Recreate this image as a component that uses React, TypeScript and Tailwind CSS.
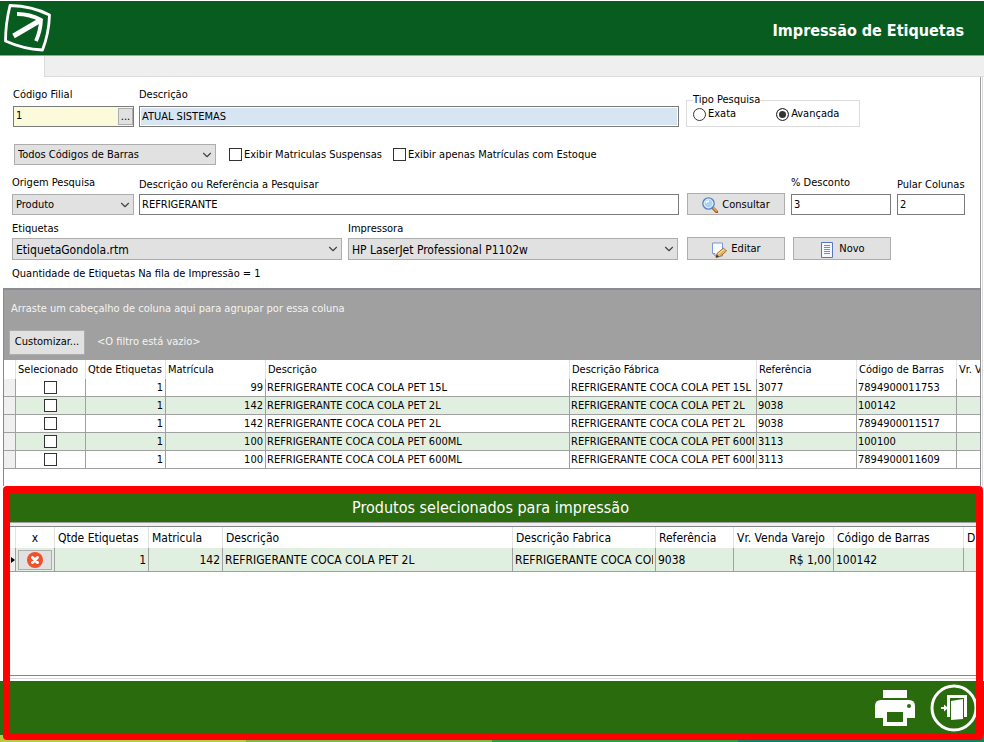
import { useId } from 'react'
import type { ReactNode } from 'react'
import { ChevronDown } from 'lucide-react'

const products = [
  { id: '99', descricao: 'REFRIGERANTE COCA COLA PET 15L', referencia: '3077', barras: '7894900011753' },
  { id: '142', descricao: 'REFRIGERANTE COCA COLA PET 2L', referencia: '9038', barras: '100142' },
  { id: '142', descricao: 'REFRIGERANTE COCA COLA PET 2L', referencia: '9038', barras: '7894900011517' },
  { id: '100', descricao: 'REFRIGERANTE COCA COLA PET 600ML', referencia: '3113', barras: '100100' },
  { id: '100', descricao: 'REFRIGERANTE COCA COLA PET 600ML', referencia: '3113', barras: '7894900011609' },
]

const inputClass = 'h-[21px] w-full min-w-0 border border-[#7a7a7a] bg-white px-[2px] outline-none'
const buttonClass = 'flex w-[98px] items-center justify-center gap-1 border border-[#adadad] bg-[#e1e1e1] pt-[2px]'
const checkClass = 'h-[13px] w-[13px] shrink-0 appearance-none border border-[#333] bg-white checked:bg-[#333]'
const radioClass =
  'h-[13px] w-[13px] shrink-0 appearance-none rounded-full border border-[#333] bg-white checked:bg-[#333] checked:shadow-[inset_0_0_0_2px_white]'

type FieldProps = {
  label: string
  className?: string
  labelClass?: string
  children: (id: string) => ReactNode
}

function Field({ label, className = '', labelClass = 'h-[17px]', children }: FieldProps) {
  const id = useId()
  return (
    <div className={`flex min-w-0 flex-col justify-end ${className}`}>
      <label htmlFor={id} className={`whitespace-nowrap leading-4 ${labelClass}`}>
        {label}
      </label>
      {children(id)}
    </div>
  )
}

function Select({ id, value, label, className = 'h-[21px]' }: { id?: string; value: string; label?: string; className?: string }) {
  return (
    <div className={`relative ${className}`}>
      <select
        id={id}
        aria-label={label}
        className="h-full w-full appearance-none border border-[#adadad] bg-[#e1e1e1] pt-[2px] pr-5 pl-[3px] outline-none"
      >
        <option>{value}</option>
      </select>
      <ChevronDown className="pointer-events-none absolute top-1/2 right-[2px] h-[14px] w-[14px] -translate-y-1/2 text-[#444]" strokeWidth={2} />
    </div>
  )
}

function LogoIcon() {
  return (
    <svg viewBox="0 0 48 50" className="h-[50px] w-12" fill="none" stroke="#fff">
      <path d="M6 2.500 Q28 3 45.500 12 Q45 30 38.500 47 Q19 46 1.500 38 Q1.500 21 6 2.500Z" strokeWidth="2.800" strokeLinejoin="round" />
      <path d="M13 11 Q26 11 37 17 Q36.500 28 32 38" strokeWidth="3.800" />
      <path d="M36 17.500 L9.500 33" strokeWidth="5" />
    </svg>
  )
}

function SearchIcon() {
  return (
    <svg viewBox="0 0 16 16" className="h-4 w-4">
      <path d="M10 10 L15 15" stroke="#9a5a2b" strokeWidth="3" strokeLinecap="round" />
      <path d="M11 10.500 L14.500 14" stroke="#f2a65c" strokeWidth="1.500" strokeLinecap="round" />
      <circle cx="6.500" cy="6.500" r="5.700" fill="#a9d2f7" stroke="#5b83c4" strokeWidth="1.300" />
      <circle cx="6.500" cy="6.500" r="4.300" fill="none" stroke="#e4f1fd" />
      <path d="M4 6 Q4.500 4 7 4" stroke="#fff" strokeWidth="1.300" fill="none" />
    </svg>
  )
}

function EditIcon() {
  return (
    <svg viewBox="0 0 16 16" className="h-4 w-4">
      <path d="M1.500 1 H11.500 V14 H4 L1.500 11.500Z" fill="#f8fbff" stroke="#7d9bd6" />
      <path d="M1.500 11.500 H4 V14" fill="#cfdcf3" stroke="#7d9bd6" />
      <path d="M5 15.500 L6 11.500 L12.500 6 L15.500 9 L9 14.500Z" fill="#f0b35a" stroke="#8a5a2a" strokeWidth="0.800" />
      <path d="M7 12 L13.500 7" stroke="#ffe2a3" />
      <path d="M5 15.500 L5.800 12.500 L8 14.700Z" fill="#333" />
    </svg>
  )
}

function NewIcon() {
  return (
    <svg viewBox="0 0 16 16" className="h-4 w-4">
      <path d="M2.500 .5 H13.500 V15.500 H2.500Z" fill="#f5f9ff" stroke="#5577c0" />
      <path d="M5 3.500 H11 M5 5.500 H11 M5 7.500 H11 M5 9.500 H11 M5 11.500 H11" stroke="#6f8fce" />
    </svg>
  )
}

function RemoveIcon() {
  return (
    <svg viewBox="0 0 16 16" className="h-4 w-4">
      <circle cx="8" cy="8" r="8" fill="#f0512d" />
      <path d="M5.500 5.500 L10.500 10.500 M10.500 5.500 L5.500 10.500" stroke="#fff" strokeWidth="3" strokeLinecap="round" />
    </svg>
  )
}

function PrinterIcon() {
  return (
    <svg viewBox="0 0 40 36" className="h-9 w-10">
      <path d="M8 0 H32 V8 H8Z" fill="#fff" />
      <path d="M6 10 H34 Q40 10 40 16 V28 H32 V36 H8 V28 H0 V16 Q0 10 6 10Z" fill="#fff" />
      <path d="M12 22 H28 V32 H12Z" fill="#2a6b0d" />
      <circle cx="34" cy="16" r="2" fill="#2a6b0d" />
    </svg>
  )
}

function ExitIcon() {
  return (
    <svg viewBox="0 0 48 48" className="h-12 w-12">
      <circle cx="24" cy="24" r="22" fill="none" stroke="#fff" strokeWidth="3" />
      <path d="M17 11 H37 V33 H34 V14 H20 V33 H17Z" fill="#fff" />
      <path d="M21 17 L33 15 V35 L21 36Z" fill="#fff" />
      <path d="M11 24 H15" stroke="#fff" strokeWidth="2" />
      <path d="M14 20.500 L18 24 L14 27.500Z" fill="#fff" />
    </svg>
  )
}

function ProductsTable() {
  const head = 'border-r border-[#e2e2e2] px-[2px] text-left font-normal whitespace-nowrap overflow-hidden'
  const cell = 'border-r border-b border-[#a0a0a0] pr-[2px] pl-px'
  return (
    <table className="w-full table-fixed border-separate border-spacing-0 leading-4">
      <colgroup>
        <col className="w-3" />
        <col className="w-[70px]" />
        <col className="w-20" />
        <col className="w-[100px]" />
        <col />
        <col className="w-[187px]" />
        <col className="w-[100px]" />
        <col className="w-[100px]" />
        <col className="w-[23px]" />
      </colgroup>
      <thead>
        <tr className="h-[19px]">
          <th className={head} />
          <th className={head}>Selecionado</th>
          <th className={head}>Qtde Etiquetas</th>
          <th className={head}>Matrícula</th>
          <th className={head}>Descrição</th>
          <th className={head}>Descrição Fábrica</th>
          <th className={head}>Referência</th>
          <th className={head}>Código de Barras</th>
          <th className="overflow-hidden pl-[2px] text-left font-normal whitespace-nowrap">Vr. Venda</th>
        </tr>
      </thead>
      <tbody>
        {products.map((p) => (
          <tr key={p.barras} className="h-[18px] even:bg-[#e1efe1]">
            <td className={`${cell} bg-[#f0f0f0]`} />
            <td className={cell}>
              <input type="checkbox" aria-label={`Selecionar ${p.barras}`} className={`${checkClass} mx-auto block`} />
            </td>
            <td className={`${cell} text-right`}>1</td>
            <td className={`${cell} text-right`}>{p.id}</td>
            <td className={cell}>{p.descricao}</td>
            <td className={cell}>
              <div className="overflow-hidden whitespace-nowrap">{p.descricao}</div>
            </td>
            <td className={cell}>{p.referencia}</td>
            <td className={cell}>{p.barras}</td>
            <td className="border-b border-[#a0a0a0]" />
          </tr>
        ))}
      </tbody>
    </table>
  )
}

function SelectedTable() {
  const head = 'border-r border-[#e2e2e2] px-[3px] text-left font-normal whitespace-nowrap overflow-hidden'
  const cell = 'border-r border-b border-[#a0a0a0] px-[2px]'
  return (
    <table className="w-full table-fixed border-separate border-spacing-0 text-[12px] leading-4">
      <colgroup>
        <col className="w-3" />
        <col className="w-[39px]" />
        <col className="w-[94px]" />
        <col className="w-[74px]" />
        <col />
        <col className="w-[143px]" />
        <col className="w-[78px]" />
        <col className="w-[100px]" />
        <col className="w-[130px]" />
        <col className="w-[13px]" />
      </colgroup>
      <thead>
        <tr className="h-[21px]">
          <th className={head} />
          <th className="border-r border-[#e2e2e2] text-center font-normal">x</th>
          <th className={head}>Qtde Etiquetas</th>
          <th className={head}>Matricula</th>
          <th className={head}>Descrição</th>
          <th className={head}>Descrição Fabrica</th>
          <th className={head}>Referência</th>
          <th className={head}>Vr. Venda Varejo</th>
          <th className={head}>Código de Barras</th>
          <th className="overflow-hidden pl-[3px] text-left font-normal">D</th>
        </tr>
      </thead>
      <tbody>
        <tr className="h-6 bg-[#e1efe1]">
          <td className="border-r border-b border-[#a0a0a0] bg-[#f0f0f0]">
            <svg viewBox="0 0 4 6" className="ml-auto h-[6px] w-1">
              <path d="M0 0 L4 3 L0 6Z" />
            </svg>
          </td>
          <td className="border-r border-b border-[#a0a0a0] px-[2px]">
            <button type="button" aria-label="Remover produto" className="flex h-5 w-full items-center justify-center border border-[#adadad] bg-[#e1e1e1]">
              <RemoveIcon />
            </button>
          </td>
          <td className={`${cell} text-right`}>1</td>
          <td className={`${cell} text-right`}>142</td>
          <td className={cell}>REFRIGERANTE COCA COLA PET 2L</td>
          <td className={cell}>
            <div className="overflow-hidden whitespace-nowrap">REFRIGERANTE COCA COLA PET 2L</div>
          </td>
          <td className={cell}>9038</td>
          <td className={`${cell} text-right`}>R$ 1,00</td>
          <td className={cell}>100142</td>
          <td className="border-b border-[#a0a0a0]" />
        </tr>
      </tbody>
    </table>
  )
}

export default function App() {
  return (
    <div className="flex min-h-screen flex-col bg-white pt-px font-['DejaVu_Sans_Condensed','DejaVu_Sans',sans-serif] text-[11px] text-black">
      <header className="flex h-[54px] items-center justify-between bg-[#095c20] pr-5 pl-1">
        <LogoIcon />
        <h1 className="pt-[6px] text-[16px] font-bold text-white">Impressão de Etiquetas</h1>
      </header>

      <div className="flex h-[22px] border-t border-[#a0a0a0]">
        <div className="w-11" />
        <div className="flex-1 border-b border-l border-[#dcdcdc] bg-[#efefef]" />
      </div>

      <main className="flex flex-1 flex-col">
        <div className="mr-[1px] border-r border-[#dcdcdc]">
          <form className="mr-[1px] border-r border-[#a0a0a0] pt-2 pr-[15px] pb-[6px] pl-3">
            <div className="flex gap-[7px]">
              <div className="flex flex-1 gap-[5px]">
                <Field label="Código Filial" className="w-[122px] pl-px" labelClass="h-[19px]">
                  {(id) => (
                    <div className="flex h-[21px] border border-[#7a7a7a] bg-[#fbfbdc]">
                      <input id={id} defaultValue="1" className="w-full min-w-0 px-[2px] outline-none" />
                      <button type="button" aria-label="Buscar filial" className="h-[17px] w-[15px] shrink-0 self-center border border-[#adadad] bg-[#e1e1e1] leading-[8px]">
                        ...
                      </button>
                    </div>
                  )}
                </Field>
                <Field label="Descrição" className="flex-1" labelClass="h-[19px]">
                  {(id) => (
                    <div className="border border-[#7a7a7a] p-px">
                      <input id={id} readOnly defaultValue="ATUAL SISTEMAS" className="block h-[17px] w-full bg-[#d7e4f2] px-px outline-none" />
                    </div>
                  )}
                </Field>
              </div>
              <div className="w-[279px]">
                <fieldset className="mt-2 h-[34px] w-[174px] border border-[#dcdcdc] px-[6px]">
                  <legend className="h-[14px] leading-[14px]">Tipo Pesquisa</legend>
                  <div className="flex gap-10 leading-[14px]">
                    <label className="flex items-center gap-[2px]">
                      <input type="radio" name="tipo" className={radioClass} />
                      Exata
                    </label>
                    <label className="flex items-center gap-[2px]">
                      <input type="radio" name="tipo" defaultChecked className={radioClass} />
                      Avançada
                    </label>
                  </div>
                </fieldset>
              </div>
            </div>

            <div className="mt-[17px] flex items-center pl-[2px]">
              <Select label="Códigos de barras" value="Todos Códigos de Barras" className="h-[21px] w-[202px]" />
              <label className="ml-[13px] flex items-center gap-[2px]">
                <input type="checkbox" className={checkClass} />
                <span className="pt-[2px]">Exibir Matriculas Suspensas</span>
              </label>
              <label className="ml-[11px] flex items-center gap-[2px]">
                <input type="checkbox" className={checkClass} />
                <span className="pt-[2px]">Exibir apenas Matrículas com Estoque</span>
              </label>
            </div>

            <div className="mt-[10px] flex gap-2">
              <div className="flex flex-1 gap-[5px]">
                <Field label="Origem Pesquisa" className="w-[122px]" labelClass="h-[19px]">
                  {(id) => <Select id={id} value="Produto" />}
                </Field>
                <Field label="Descrição ou Referência a Pesquisar" className="flex-1">
                  {(id) => <input id={id} defaultValue="REFRIGERANTE" className={inputClass} />}
                </Field>
              </div>
              <div className="flex w-[278px] items-end gap-[6px]">
                <button type="button" className={`${buttonClass} h-[22px] shrink-0`}>
                  <SearchIcon />
                  Consultar
                </button>
                <Field label="% Desconto" className="w-[100px]" labelClass="h-[19px]">
                  {(id) => <input id={id} defaultValue="3" className={inputClass} />}
                </Field>
                <Field label="Pular Colunas" className="w-[68px]">
                  {(id) => <input id={id} defaultValue="2" className={inputClass} />}
                </Field>
              </div>
            </div>

            <div className="mt-[6px] flex items-end gap-[9px]">
              <div className="flex flex-1 gap-[6px]">
                <Field label="Etiquetas" className="flex-1">
                  {(id) => <Select id={id} value="EtiquetaGondola.rtm" className="h-[22px] text-[12px]" />}
                </Field>
                <Field label="Impressora" className="flex-1">
                  {(id) => <Select id={id} value="HP LaserJet Professional P1102w" className="h-[22px] text-[12px]" />}
                </Field>
              </div>
              <div className="flex w-[278px] gap-2">
                <button type="button" className={`${buttonClass} h-[23px]`}>
                  <EditIcon />
                  Editar
                </button>
                <button type="button" className={`${buttonClass} h-[23px]`}>
                  <NewIcon />
                  Novo
                </button>
              </div>
            </div>

            <p className="mt-[6px] leading-4">Quantidade de Etiquetas Na fila de Impressão = 1</p>
          </form>

          <section className="mr-[1px] ml-[3px] h-[198px] overflow-hidden border-t-2 border-r border-l border-[#8a8a90]">
            <div className="bg-[#a0a0a0] px-[5px] pt-[11px] pb-[5px] text-[#f4f4f4]">
              <p className="pl-[2px] leading-4">Arraste um cabeçalho de coluna aqui para agrupar por essa coluna</p>
              <div className="mt-[13px] flex items-center gap-3">
                <button type="button" className="h-[25px] w-[76px] border border-[#adadad] bg-[#e1e1e1] text-black">
                  Customizar...
                </button>
                <span>&lt;O filtro está vazio&gt;</span>
              </div>
            </div>
            <ProductsTable />
          </section>
        </div>

        <div className="relative flex flex-1 flex-col">
          <section className="mr-[7px] ml-1 flex flex-1 flex-col pt-[7px]">
            <h2 className="h-[29px] bg-[#2a6b0d] text-center text-[16px] leading-[29px] text-white">Produtos selecionados para impressão</h2>
            <div className="h-1 border-t border-[#a0a0a0] bg-[#f0f0f0]" />
            <div className="flex-1 border-t border-b border-[#83838f]">
              <SelectedTable />
            </div>
            <div className="mt-[2px] h-[3px] border-t border-[#dcdcdc]" />
          </section>
          <footer className="flex h-[54px] items-center justify-end gap-[15px] bg-[#2a6b0d] pr-[6px]">
            <button type="button" aria-label="Imprimir">
              <PrinterIcon />
            </button>
            <button type="button" aria-label="Sair">
              <ExitIcon />
            </button>
          </footer>
          <div className="grid h-[7px] grid-cols-4">
            <div className="bg-[#b5cc3e]" />
            <div className="bg-[#7bbb45]" />
            <div className="bg-[#2aa043]" />
            <div className="bg-[#0f8464]" />
          </div>
          <div className="pointer-events-none absolute inset-x-[3px] right-px top-0 bottom-[2px] rounded-sm border-[7px] border-[#ff0000]" />
        </div>
      </main>
    </div>
  )
}
